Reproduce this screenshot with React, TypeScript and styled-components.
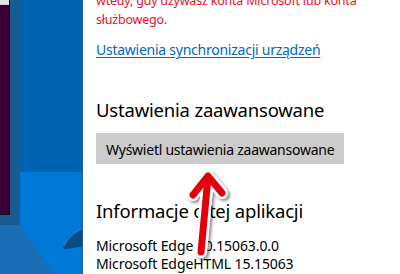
import styled, { createGlobalStyle } from "styled-components";

const GlobalStyle = createGlobalStyle`
    html, body {
        margin: 0;
        padding: 0;
        background: #ffffff;
    }
    body {
        font-family: "Noto Sans", "Open Sans", sans-serif;
    }
`;

const Screen = styled.div`
    position: relative;
    display: flex;
    width: 400px;
    height: 274px;
    overflow: hidden;
`;

// left strip: the desktop behind the settings pane
const Desktop = styled.div`
    position: relative;
    flex: 0 0 82px;
    height: 100%;
    border-right: 1px solid #1f5f98;
    background: linear-gradient(to bottom, #0063b1 0, #0063b1 172px, #0078d7 172px);
    overflow: hidden;
`;

const WindowShadow = styled.div`
    position: absolute;
    left: 0;
    top: 0;
    width: 20px;
    height: 225px;
    background: #185c91;
`;

const Floor = styled.div`
    position: absolute;
    left: 0;
    top: 225px;
    width: 60px;
    height: 49px;
    background: #1a6db5;
    clip-path: polygon(0 0, 20px 0, 53px 100%, 0 100%);
`;

const AppWindow = styled.div`
    position: absolute;
    left: 0;
    top: 0;
    width: 9px;
    height: 214px;
    background: #3b0036;
    border-right: 1px solid #111;
    border-bottom: 1px solid #111;
`;

const TitleStrip = styled.div`
    height: 4px;
    background: #e4e4e4;
    border-bottom: 1px solid #cfcfcf;
`;

const Swoosh = styled.svg`
    position: absolute;
    left: 60px;
    top: 224px;
`;

const Pane = styled.div`
    flex: 1;
    padding: 0 0 0 13px;
    background: #fff;
    color: #000;
    overflow: hidden;
`;

const Note = styled.p`
    margin: -9px 0 0 0;
    font-size: 12.5px;
    line-height: 19px;
    letter-spacing: -0.2px;
    color: #e81123;
    white-space: nowrap;
`;

const Link = styled.a`
    display: block;
    margin-top: 11px;
    font-size: 14px;
    line-height: 19px;
    letter-spacing: -0.25px;
    color: #0067c0;
    text-decoration: underline;
    text-underline-offset: 2px;
    white-space: nowrap;
`;

const Heading = styled.h2<{ $gap: number }>`
    margin: ${(p) => p.$gap}px 0 0 0;
    font-size: 18.5px;
    font-weight: 400;
    line-height: 26px;
    letter-spacing: -0.2px;
    white-space: nowrap;
`;

const Button = styled.button`
    display: block;
    margin-top: 10px;
    padding: 7px 10px 5px;
    border: none;
    background: #cccccc;
    font-family: inherit;
    font-size: 14px;
    line-height: 19px;
    letter-spacing: -0.25px;
    color: #000;
    white-space: nowrap;
`;

const InfoList = styled.div`
    margin-top: 13px;
    font-size: 14px;
    line-height: 18px;
    letter-spacing: -0.1px;
    white-space: nowrap;
`;

const Arrow = styled.svg`
    position: absolute;
    left: 0;
    top: 0;
    pointer-events: none;
`;

export default function App() {
    return (
        <>
            <GlobalStyle />
            <Screen>
                <Desktop>
                    <WindowShadow />
                    <Floor />
                    <AppWindow>
                        <TitleStrip />
                    </AppWindow>
                    <Swoosh width="24" height="28" viewBox="0 0 24 28">
                        <path d="M4 22 C 8 14, 16 6, 26 4 L 26 22 C 18 23, 10 25, 6 25 C 3 25, 2 24, 4 22 Z" fill="#0a4d86" />
                        <path d="M4 22 C 8 14, 16 6, 26 4" stroke="#2f7fc4" strokeWidth="1" fill="none" />
                    </Swoosh>
                </Desktop>
                <Pane>
                    <Note>
                        wtedy, gdy używasz konta Microsoft lub konta
                        <br />
                        służbowego.
                    </Note>
                    <Link>Ustawienia synchronizacji urządzeń</Link>
                    <Heading $gap={38}>Ustawienia zaawansowane</Heading>
                    <Button>Wyświetl ustawienia zaawansowane</Button>
                    <Heading $gap={34}>Informacje o tej aplikacji</Heading>
                    <InfoList>
                        <div>Microsoft Edge 40.15063.0.0</div>
                        <div>Microsoft EdgeHTML 15.15063</div>
                    </InfoList>
                </Pane>
                <Arrow width="400" height="274" viewBox="0 0 400 274">
                    <defs>
                        <filter id="shade" x="-50%" y="-20%" width="200%" height="140%">
                            <feDropShadow dx="2" dy="2" stdDeviation="1.5" floodColor="#000" floodOpacity="0.45" />
                        </filter>
                    </defs>
                    <g filter="url(#shade)" fill="none" strokeLinecap="round" strokeLinejoin="round">
                        <path d="M201 252 L208 177 M193 195 L208 176 L222 193" stroke="#fff" strokeWidth="12" />
                        <path d="M201 252 L208 177 M193 195 L208 176 L222 193" stroke="#e3000b" strokeWidth="7" />
                    </g>
                </Arrow>
            </Screen>
        </>
    );
}
